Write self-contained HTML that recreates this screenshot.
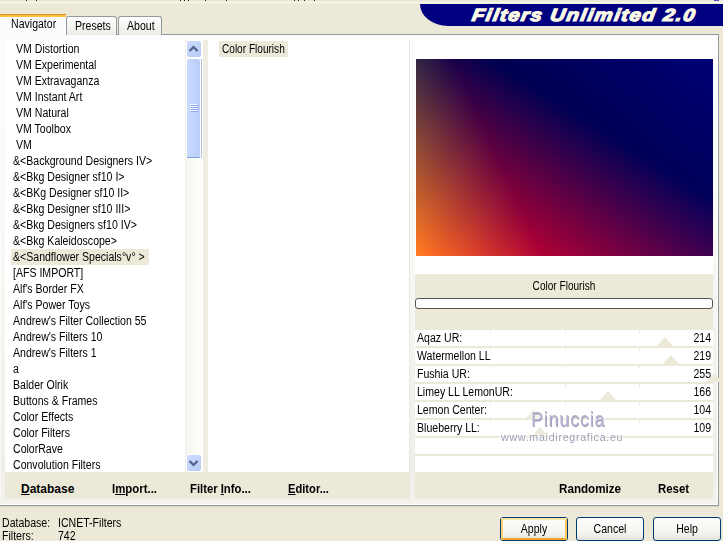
<!DOCTYPE html>
<html><head><meta charset="utf-8">
<style>
*{margin:0;padding:0;box-sizing:border-box}
html,body{width:723px;height:541px;overflow:hidden;background:#ece9d8;position:relative;font-family:"Liberation Sans",sans-serif;font-size:12px;color:#000}
div{position:absolute}
.t{white-space:pre;font-size:12px;line-height:16px}
.b{font-weight:bold}
.hl{background:#ece9d8}
.u{text-decoration:underline;text-underline-offset:1px}
.srow{left:415px;width:298px;height:16px;background:#fff}
.sep{left:415px;width:298px;height:2px;background:#ece9d8}
.tri{width:0;height:0;border-left:8px solid transparent;border-right:8px solid transparent;border-bottom:9px solid #ece9d8}
.tick{width:1px;height:3px;background:#ebe9e2}
.btn{top:517px;height:24px;border:1px solid #003c74;border-radius:3px;background:linear-gradient(#fefefe,#f4f3ee 70%,#e3e1d6)}
</style></head><body>
<!-- top strip -->
<div style="left:714px;top:0;width:5px;height:1px;background:#5050c0"></div>
<div style="left:26px;top:0;width:1px;height:1px;background:#222"></div><div style="left:36px;top:0;width:1px;height:1px;background:#222"></div><div style="left:180px;top:0;width:1px;height:1px;background:#222"></div><div style="left:184px;top:0;width:1px;height:1px;background:#222"></div><div style="left:188px;top:0;width:1px;height:1px;background:#222"></div><div style="left:205px;top:0;width:1px;height:1px;background:#222"></div><div style="left:226px;top:0;width:1px;height:1px;background:#222"></div><div style="left:294px;top:0;width:1px;height:1px;background:#222"></div><div style="left:298px;top:0;width:1px;height:1px;background:#222"></div><div style="left:304px;top:0;width:1px;height:1px;background:#222"></div><div style="left:314px;top:0;width:1px;height:1px;background:#222"></div>
<div style="left:0;top:2px;width:723px;height:1px;background:#fbfaf4"></div>
<!-- banner -->
<div style="left:420px;top:4px;width:303px;height:22px;background:#000080;border-bottom-left-radius:28px 22px"></div>
<div id="title" style="left:473.5px;top:3.5px;white-space:pre;color:#fafae6;font-weight:bold;font-style:italic;font-size:17.5px;line-height:22px;letter-spacing:1.2px;-webkit-text-stroke:1.2px #fafae6;transform:scaleX(1.17) skewX(-8deg);transform-origin:0 0">Filters Unlimited 2.0</div>

<!-- tab page -->
<div style="left:0;top:34px;width:719px;height:472px;border:1px solid #919b9c;border-left:none;background:linear-gradient(#fcfcfe,#f7f7f4 50%,#efeee8 92%,#f3f2ec)"></div>
<!-- tabs -->
<div style="left:66px;top:16px;width:51px;height:19px;border:1px solid #919b9c;border-bottom:none;border-radius:3px 3px 0 0;background:linear-gradient(#fefefe,#ecebe6)"></div>
<div style="left:118px;top:16px;width:44px;height:19px;border:1px solid #919b9c;border-bottom:none;border-radius:3px 3px 0 0;background:linear-gradient(#fefefe,#ecebe6)"></div>
<div style="left:0;top:14px;width:66px;height:21px;background:#fcfcfe"></div>
<div style="left:0;top:14px;width:66px;height:1px;background:#e68b2c"></div>
<div style="left:0;top:15px;width:66px;height:2px;background:#ffc33c"></div>
<div class="t" style="left:11px;top:16px;transform:scaleX(0.88);transform-origin:0 0;">Navigator</div>
<div class="t" style="left:75px;top:18px;transform:scaleX(0.88);transform-origin:0 0;">Presets</div>
<div class="t" style="left:127px;top:18px;transform:scaleX(0.88);transform-origin:0 0;">About</div>

<div style="left:0;top:35px;width:1px;height:470px;background:linear-gradient(#fff,#f8f8f5)"></div>
<div style="left:717px;top:35px;width:1px;height:470px;background:#fff"></div>
<!-- left list -->
<div style="left:5px;top:40px;width:181px;height:432px;background:#fff"></div>
<div class="t" style="left:16px;top:41px;transform:scaleX(0.88);transform-origin:0 0;">VM Distortion</div>
<div class="t" style="left:16px;top:57px;transform:scaleX(0.88);transform-origin:0 0;">VM Experimental</div>
<div class="t" style="left:16px;top:73px;transform:scaleX(0.88);transform-origin:0 0;">VM Extravaganza</div>
<div class="t" style="left:16px;top:89px;transform:scaleX(0.88);transform-origin:0 0;">VM Instant Art</div>
<div class="t" style="left:16px;top:105px;transform:scaleX(0.88);transform-origin:0 0;">VM Natural</div>
<div class="t" style="left:16px;top:121px;transform:scaleX(0.88);transform-origin:0 0;">VM Toolbox</div>
<div class="t" style="left:16px;top:137px;transform:scaleX(0.88);transform-origin:0 0;">VM</div>
<div class="t" style="left:13px;top:153px;transform:scaleX(0.88);transform-origin:0 0;">&amp;&lt;Background Designers IV&gt;</div>
<div class="t" style="left:13px;top:169px;transform:scaleX(0.88);transform-origin:0 0;">&amp;&lt;Bkg Designer sf10 I&gt;</div>
<div class="t" style="left:13px;top:185px;transform:scaleX(0.88);transform-origin:0 0;">&amp;&lt;BKg Designer sf10 II&gt;</div>
<div class="t" style="left:13px;top:201px;transform:scaleX(0.88);transform-origin:0 0;">&amp;&lt;Bkg Designer sf10 III&gt;</div>
<div class="t" style="left:13px;top:217px;transform:scaleX(0.88);transform-origin:0 0;">&amp;&lt;Bkg Designers sf10 IV&gt;</div>
<div class="t" style="left:13px;top:233px;transform:scaleX(0.88);transform-origin:0 0;">&amp;&lt;Bkg Kaleidoscope&gt;</div>
<div class="hl" style="left:11px;top:249px;width:138px;height:16px"></div>
<div class="t" style="left:13px;top:249px;transform:scaleX(0.88);transform-origin:0 0;">&amp;&lt;Sandflower Specials°v° &gt;</div>
<div class="t" style="left:13px;top:265px;transform:scaleX(0.88);transform-origin:0 0;">[AFS IMPORT]</div>
<div class="t" style="left:13px;top:281px;transform:scaleX(0.88);transform-origin:0 0;">Alf's Border FX</div>
<div class="t" style="left:13px;top:297px;transform:scaleX(0.88);transform-origin:0 0;">Alf's Power Toys</div>
<div class="t" style="left:13px;top:313px;transform:scaleX(0.88);transform-origin:0 0;">Andrew's Filter Collection 55</div>
<div class="t" style="left:13px;top:329px;transform:scaleX(0.88);transform-origin:0 0;">Andrew's Filters 10</div>
<div class="t" style="left:13px;top:345px;transform:scaleX(0.88);transform-origin:0 0;">Andrew's Filters 1</div>
<div class="t" style="left:13px;top:361px;transform:scaleX(0.88);transform-origin:0 0;">a</div>
<div class="t" style="left:13px;top:377px;transform:scaleX(0.88);transform-origin:0 0;">Balder Olrik</div>
<div class="t" style="left:13px;top:393px;transform:scaleX(0.88);transform-origin:0 0;">Buttons &amp; Frames</div>
<div class="t" style="left:13px;top:409px;transform:scaleX(0.88);transform-origin:0 0;">Color Effects</div>
<div class="t" style="left:13px;top:425px;transform:scaleX(0.88);transform-origin:0 0;">Color Filters</div>
<div class="t" style="left:13px;top:441px;transform:scaleX(0.88);transform-origin:0 0;">ColorRave</div>
<div class="t" style="left:13px;top:457px;transform:scaleX(0.88);transform-origin:0 0;">Convolution Filters</div>
<!-- scrollbar -->
<div style="left:185px;top:40px;width:18px;height:432px;background:linear-gradient(90deg,#eeede5,#f7f6f0 10%,#fdfdfa 80%,#fff)"></div>
<div style="left:186px;top:40px;width:16px;height:18px;border:1px solid #fff;border-radius:3px;background:linear-gradient(135deg,#cddbfd,#b6caf6)"></div>
<div style="left:186px;top:58px;width:15px;height:100px;border:1px solid #fff;border-bottom-color:#7f9de3;border-radius:3px;background:linear-gradient(90deg,#c9d9fd,#b9cdf8)"></div>
<div style="left:186px;top:454px;width:16px;height:18px;border:1px solid #fff;border-radius:3px;background:linear-gradient(135deg,#cddbfd,#b6caf6)"></div>
<svg style="position:absolute;left:186px;top:40px" width="16" height="18"><path d="M3.5 11 L7.5 7 L11.5 11" fill="none" stroke="#4d6185" stroke-width="2.2"/></svg>
<svg style="position:absolute;left:186px;top:454px" width="16" height="18"><path d="M3.5 7 L7.5 11 L11.5 7" fill="none" stroke="#4d6185" stroke-width="2.2"/></svg>
<div style="left:201px;top:59px;width:1px;height:99px;background:#aebde3"></div><svg style="position:absolute;left:190px;top:103px" width="9" height="10"><path d="M1 2.5H8M1 4.5H8M1 6.5H8M1 8.5H8" stroke="#8eaaf0" stroke-width="1"/><path d="M0 1.5H7M0 3.5H7M0 5.5H7M0 7.5H7" stroke="#f4f7fe" stroke-width="1"/></svg>
<!-- beige strip -->
<div style="left:203px;top:40px;width:5px;height:432px;background:#efede2"></div>

<!-- middle list -->
<div style="left:208px;top:40px;width:201px;height:432px;background:#fff"></div>
<div class="hl" style="left:219px;top:41px;width:69px;height:16px"></div>
<div class="t" style="left:222px;top:41px;transform:scaleX(0.84);transform-origin:0 0;">Color Flourish</div>

<!-- divider -->
<div style="left:409px;top:40px;width:1px;height:460px;background:#e9e7de"></div>

<!-- right panel -->
<div style="left:415px;top:40px;width:298px;height:234px;background:#fff"></div>
<svg width="297" height="197" style="position:absolute;left:416px;top:59px;isolation:isolate;display:block">
<defs><linearGradient id="gr" gradientUnits="userSpaceOnUse" x1="20.82" y1="-33.19" x2="-86.10" y2="137.26"><stop offset="0" stop-color="#000"/><stop offset="1" stop-color="#f00"/></linearGradient><linearGradient id="gg" gradientUnits="userSpaceOnUse" x1="31.73" y1="-14.22" x2="-184.42" y2="82.63"><stop offset="0" stop-color="#000"/><stop offset="1" stop-color="#0f0"/></linearGradient><linearGradient id="gb" gradientUnits="userSpaceOnUse" x1="-181.98" y1="206.34" x2="496.61" y2="-563.08"><stop offset="0" stop-color="#000"/><stop offset="1" stop-color="#00f"/></linearGradient></defs>
<rect width="297" height="197" fill="url(#gr)"/>
<rect width="297" height="197" fill="url(#gg)" style="mix-blend-mode:screen"/>
<rect width="297" height="197" fill="url(#gb)" style="mix-blend-mode:screen"/>
</svg>
<div style="left:415px;top:274px;width:298px;height:56px;background:#ece9d8"></div>
<div class="t" style="left:364px;width:400px;text-align:center;top:278px;transform:scaleX(0.84);transform-origin:50% 0;">Color Flourish</div>
<div style="left:415px;top:298px;width:298px;height:11px;border:1px solid #555;border-radius:3px;background:#fff"></div>
<div class="srow" style="top:330px"></div>
<div class="sep" style="top:346px"></div>
<div class="srow" style="top:348px"></div>
<div class="sep" style="top:364px"></div>
<div class="srow" style="top:366px"></div>
<div class="sep" style="top:382px"></div>
<div class="srow" style="top:384px"></div>
<div class="sep" style="top:400px"></div>
<div class="srow" style="top:402px"></div>
<div class="sep" style="top:418px"></div>
<div class="srow" style="top:420px"></div>
<div class="sep" style="top:436px"></div>
<div class="srow" style="top:438px"></div>
<div class="sep" style="top:454px"></div>
<div class="srow" style="top:456px"></div>
<div class="sep" style="top:472px"></div>
<div class="tri" style="left:657px;top:337px"></div>
<div class="tri" style="left:663px;top:355px"></div>
<div class="tri" style="left:706px;top:373px"></div>
<div class="tri" style="left:600px;top:391px"></div>
<div class="tri" style="left:526px;top:409px"></div>
<div class="tri" style="left:532px;top:427px"></div>
<div class="tick" style="left:490px;top:330px"></div>
<div class="tick" style="left:565px;top:330px"></div>
<div class="tick" style="left:639px;top:330px"></div>
<div class="tick" style="left:490px;top:348px"></div>
<div class="tick" style="left:565px;top:348px"></div>
<div class="tick" style="left:639px;top:348px"></div>
<div class="tick" style="left:490px;top:366px"></div>
<div class="tick" style="left:565px;top:366px"></div>
<div class="tick" style="left:639px;top:366px"></div>
<div class="tick" style="left:490px;top:384px"></div>
<div class="tick" style="left:565px;top:384px"></div>
<div class="tick" style="left:639px;top:384px"></div>
<div class="tick" style="left:490px;top:402px"></div>
<div class="tick" style="left:565px;top:402px"></div>
<div class="tick" style="left:639px;top:402px"></div>
<div class="tick" style="left:490px;top:420px"></div>
<div class="tick" style="left:565px;top:420px"></div>
<div class="tick" style="left:639px;top:420px"></div>
<div class="t" style="left:417px;top:330px;transform:scaleX(0.88);transform-origin:0 0;">Aqaz UR:</div>
<div class="t" style="right:12px;top:330px;transform:scaleX(0.88);transform-origin:100% 0;">214</div>
<div class="t" style="left:417px;top:348px;transform:scaleX(0.88);transform-origin:0 0;">Watermellon LL</div>
<div class="t" style="right:12px;top:348px;transform:scaleX(0.88);transform-origin:100% 0;">219</div>
<div class="t" style="left:417px;top:366px;transform:scaleX(0.88);transform-origin:0 0;">Fushia UR:</div>
<div class="t" style="right:12px;top:366px;transform:scaleX(0.88);transform-origin:100% 0;">255</div>
<div class="t" style="left:417px;top:384px;transform:scaleX(0.88);transform-origin:0 0;">Limey LL LemonUR:</div>
<div class="t" style="right:12px;top:384px;transform:scaleX(0.88);transform-origin:100% 0;">166</div>
<div class="t" style="left:417px;top:402px;transform:scaleX(0.88);transform-origin:0 0;">Lemon Center:</div>
<div class="t" style="right:12px;top:402px;transform:scaleX(0.88);transform-origin:100% 0;">104</div>
<div class="t" style="left:417px;top:420px;transform:scaleX(0.88);transform-origin:0 0;">Blueberry LL:</div>
<div class="t" style="right:12px;top:420px;transform:scaleX(0.88);transform-origin:100% 0;">109</div>

<!-- bottom bars -->
<div style="left:5px;top:472px;width:404px;height:25px;background:#ece9d8"></div>
<div style="left:5px;top:497px;width:404px;height:3px;background:linear-gradient(#edebdf,#f1f0e8)"></div>
<div style="left:415px;top:472px;width:298px;height:25px;background:#ece9d8"></div>
<div style="left:415px;top:497px;width:298px;height:3px;background:linear-gradient(#edebdf,#f1f0e8)"></div>
<div style="left:0;top:500px;width:718px;height:4px;background:#f4f3ee"></div>
<div style="left:0;top:504px;width:718px;height:1px;background:#fff"></div>
<div style="left:0;top:506px;width:719px;height:1px;background:#d6d6cb"></div>
<div class="t b" style="left:21px;top:481px;transform:scaleX(1.0);transform-origin:0 0;"><span class="u">D</span>atabase</div>
<div class="t b" style="left:112px;top:481px;transform:scaleX(0.95);transform-origin:0 0;">I<span class="u">m</span>port...</div>
<div class="t b" style="left:190px;top:481px;transform:scaleX(0.94);transform-origin:0 0;">Filter <span class="u">I</span>nfo...</div>
<div class="t b" style="left:288px;top:481px;transform:scaleX(0.93);transform-origin:0 0;"><span class="u">E</span>ditor...</div>
<div class="t b" style="left:559px;top:481px;transform:scaleX(0.97);transform-origin:0 0;">Randomize</div>
<div class="t b" style="left:658px;top:481px;transform:scaleX(0.95);transform-origin:0 0;">Reset</div>

<!-- status -->
<div class="t" style="left:2px;top:515px;transform:scaleX(0.88);transform-origin:0 0;">Database:</div>
<div class="t" style="left:58px;top:515px;transform:scaleX(0.88);transform-origin:0 0;">ICNET-Filters</div>
<div class="t" style="left:2px;top:528px;transform:scaleX(0.88);transform-origin:0 0;">Filters:</div>
<div class="t" style="left:58px;top:528px;transform:scaleX(0.88);transform-origin:0 0;">742</div>

<!-- buttons -->
<div class="btn" style="left:500px;width:68px;"><div style="left:0;top:0;right:0;bottom:0;border:2px solid;border-color:#fde6a6 #f9c95e #f0a52a #fbd373;border-radius:1px"></div></div>
<div class="btn" style="left:576px;width:68px"></div>
<div class="btn" style="left:653px;width:68px"></div>
<div class="t" style="left:334px;width:400px;text-align:center;top:521px;transform:scaleX(0.88);transform-origin:50% 0;">Apply</div>
<div class="t" style="left:410px;width:400px;text-align:center;top:521px;transform:scaleX(0.88);transform-origin:50% 0;">Cancel</div>
<div class="t" style="left:487px;width:400px;text-align:center;top:521px;transform:scaleX(0.88);transform-origin:50% 0;">Help</div>

<!-- watermark -->
<div style="left:531px;top:407px;white-space:pre;font-size:21px;line-height:24px;color:#b6b6d2;letter-spacing:1px;transform:scaleX(0.85);transform-origin:0 0;text-shadow:0.7px 0.7px 0 #9898b4,0 0 2px #fff,0 0 3px #fff,0 0 5px #fff">Pinuccia</div>
<div style="left:501px;top:429.5px;white-space:pre;font-size:11.5px;line-height:14px;color:#9c9cb4;letter-spacing:0.75px;transform:scaleX(0.93);transform-origin:0 0;text-shadow:0 0 2px #fff,0 0 3px #fff,0 0 4px #fff">www.maidiregrafica.eu</div>
</body></html>
